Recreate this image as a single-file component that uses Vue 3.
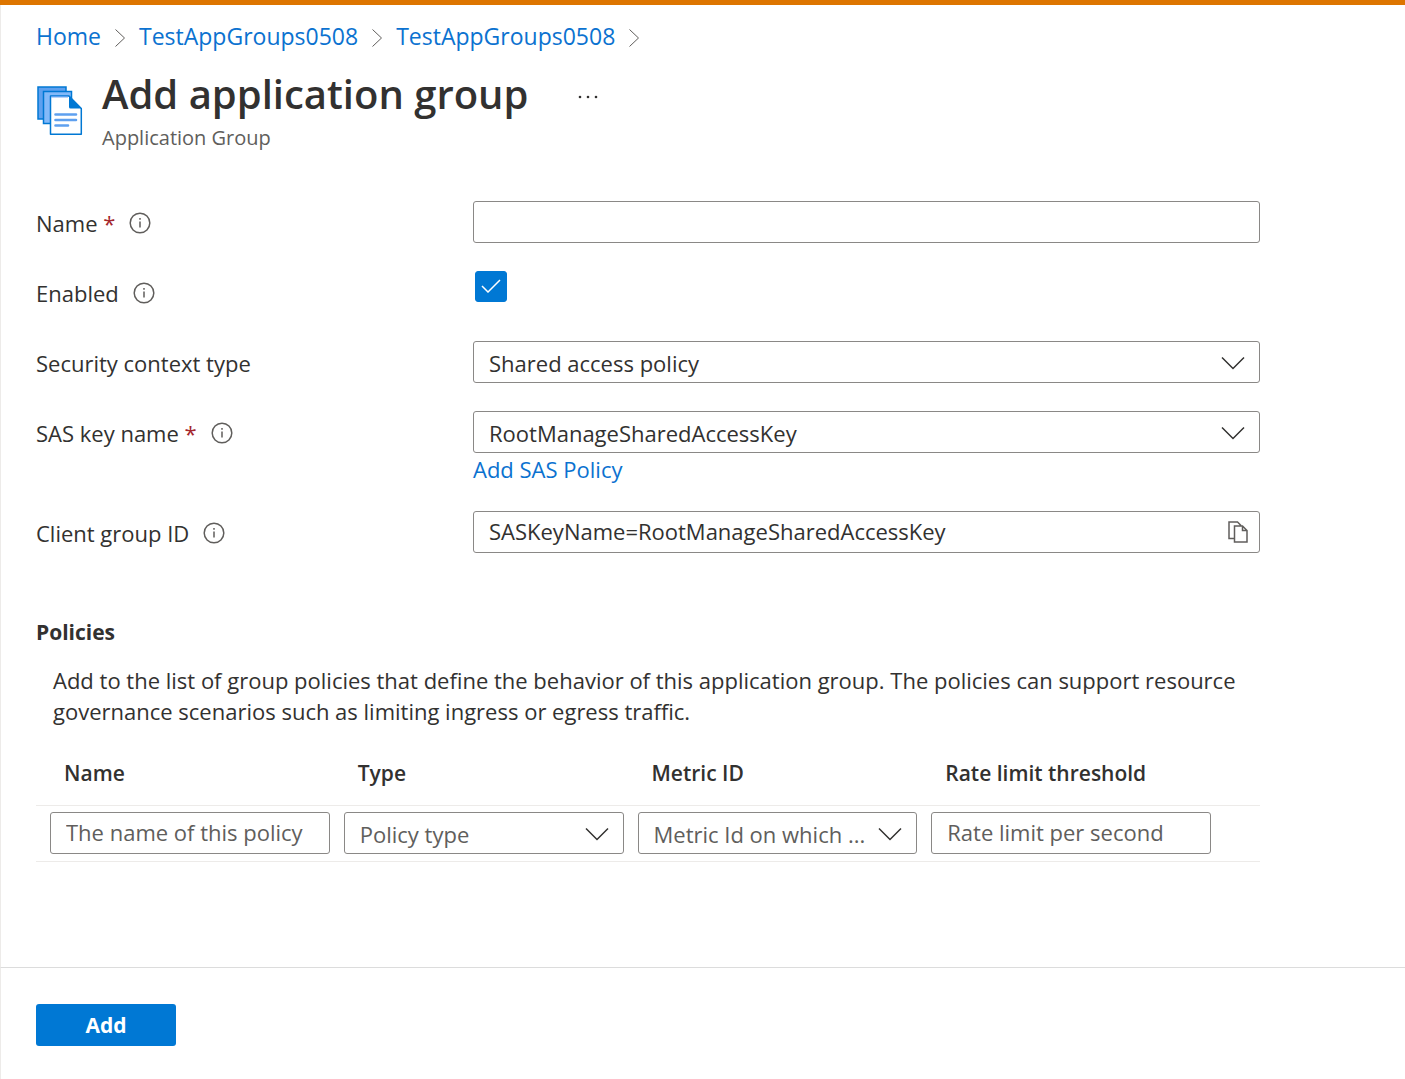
<script setup>
import { ref } from 'vue'

const crumbs = ['Home', 'TestAppGroups0508', 'TestAppGroups0508']
const name = ref('')
const enabled = ref(true)
const contextType = ref('Shared access policy')
const sasKey = ref('RootManageSharedAccessKey')
const clientGroup = ref('SASKeyName=RootManageSharedAccessKey')
const policyName = ref('')
const policyType = ref('Policy type')
const metric = ref('Metric Id on which ...')
const rateLimit = ref('')
</script>

<template>
  <div class="blade">
    <header class="head">
      <nav class="crumbs" aria-label="Breadcrumb">
        <template v-for="(crumb, i) in crumbs" :key="i">
          <a href="#">{{ crumb }}</a>
          <svg class="sep" width="12" height="20" viewBox="0 0 12 20" aria-hidden="true"><path d="M1.500 1.500L10.500 10L1.500 18.500" /></svg>
        </template>
      </nav>
      <div class="title-row">
        <svg class="logo" width="46" height="50" viewBox="0 0 46 50" aria-hidden="true">
          <rect x="1" y="1" width="28" height="32" fill="#5ea0ef" stroke="#0078d4" stroke-width="1.500" />
          <rect x="6.500" y="5.500" width="28" height="32" fill="#83b9f9" stroke="#0078d4" stroke-width="1.500" />
          <path d="M13.500 10H32L44.300 22.500V48.300H13.500Z" fill="#fff" stroke="#0078d4" stroke-width="1.500" stroke-linejoin="round" />
          <path d="M14.200 10.700H31" stroke="#5ea0ef" stroke-width="1.500" />
          <path d="M32 10L44.500 22.500H33.500Q32 22.500 32 21Z" fill="#0078d4" />
          <path d="M18.500 28.500H39M18.500 34H39M18.500 39.500H31" fill="none" stroke="#5ea0ef" stroke-width="2.600" stroke-linecap="round" />
        </svg>
        <div class="titles">
          <h1>Add application group</h1>
          <p>Application Group</p>
        </div>
        <button class="more" type="button" aria-label="More actions">
          <svg width="20" height="4" viewBox="0 0 20 4"><circle cx="2" cy="2" r="1.300" /><circle cx="10" cy="2" r="1.300" /><circle cx="18" cy="2" r="1.300" /></svg>
        </button>
      </div>
    </header>

    <main class="content">
      <form id="group-form" class="form" @submit.prevent>
        <div class="row">
          <div class="label">
            <label for="name">Name <span class="req">*</span></label>
            <svg class="info" viewBox="0 0 22 22"><circle cx="11" cy="11" r="9.800" /><path d="M11 9.500V15.500M11 6V7.700" /></svg>
          </div>
          <input id="name" v-model="name" class="box" type="text" />
        </div>

        <div class="row">
          <div class="label">
            <label for="enabled">Enabled</label>
            <svg class="info" viewBox="0 0 22 22"><circle cx="11" cy="11" r="9.800" /><path d="M11 9.500V15.500M11 6V7.700" /></svg>
          </div>
          <div class="check">
            <input id="enabled" v-model="enabled" type="checkbox" />
            <svg v-if="enabled" width="20" height="14" viewBox="0 0 20 14"><path d="M1 7L7 13L19 1" /></svg>
          </div>
        </div>

        <div class="row">
          <div class="label"><label for="context">Security context type</label></div>
          <div class="picker">
            <select id="context" v-model="contextType" class="box"><option>Shared access policy</option></select>
            <svg class="chevron" viewBox="0 0 24 14"><path d="M1 1.500L12 12.500L23 1.500" /></svg>
          </div>
        </div>

        <div class="row">
          <div class="label">
            <label for="sas">SAS key name <span class="req">*</span></label>
            <svg class="info" viewBox="0 0 22 22"><circle cx="11" cy="11" r="9.800" /><path d="M11 9.500V15.500M11 6V7.700" /></svg>
          </div>
          <div>
            <div class="picker">
              <select id="sas" v-model="sasKey" class="box"><option>RootManageSharedAccessKey</option></select>
              <svg class="chevron" viewBox="0 0 24 14"><path d="M1 1.500L12 12.500L23 1.500" /></svg>
            </div>
            <a class="add-sas" href="#">Add SAS Policy</a>
          </div>
        </div>

        <div class="row">
          <div class="label">
            <label for="client">Client group ID</label>
            <svg class="info" viewBox="0 0 22 22"><circle cx="11" cy="11" r="9.800" /><path d="M11 9.500V15.500M11 6V7.700" /></svg>
          </div>
          <div class="picker">
            <input id="client" v-model="clientGroup" class="box" type="text" readonly />
            <button class="copy" type="button" aria-label="Copy to clipboard">
              <svg width="20" height="22" viewBox="0 0 20 22"><path d="M6 17.500H1V1H9.500L13 4.500M6.500 5H14.500L19 9.500V21H6.500ZM14.500 5V9.500H19" /></svg>
            </button>
          </div>
        </div>
      </form>

      <section class="policies">
        <h2>Policies</h2>
        <p>Add to the list of group policies that define the behavior of this application group. The policies can support resource governance scenarios such as limiting ingress or egress traffic.</p>
        <table>
          <thead>
            <tr>
              <th scope="col">Name</th>
              <th scope="col">Type</th>
              <th scope="col">Metric ID</th>
              <th scope="col" class="last">Rate limit threshold</th>
            </tr>
          </thead>
          <tbody>
            <tr>
              <td><input v-model="policyName" class="box" type="text" aria-label="Name" placeholder="The name of this policy" /></td>
              <td>
                <div class="picker">
                  <select v-model="policyType" class="box muted" aria-label="Type"><option>Policy type</option></select>
                  <svg class="chevron" viewBox="0 0 24 14"><path d="M1 1.500L12 12.500L23 1.500" /></svg>
                </div>
              </td>
              <td>
                <div class="picker">
                  <select v-model="metric" class="box muted" aria-label="Metric ID"><option>Metric Id on which ...</option></select>
                  <svg class="chevron" viewBox="0 0 24 14"><path d="M1 1.500L12 12.500L23 1.500" /></svg>
                </div>
              </td>
              <td class="last"><input v-model="rateLimit" class="box" type="text" aria-label="Rate limit threshold" placeholder="Rate limit per second" /></td>
            </tr>
          </tbody>
        </table>
      </section>
    </main>

    <footer class="foot">
      <button class="primary" type="submit" form="group-form">Add</button>
    </footer>
  </div>
</template>

<style>
body {
  margin: 0;
  background: #fff;
}
</style>

<style scoped>
.blade,
.blade * {
  box-sizing: border-box;
}
.blade {
  display: flex;
  flex-direction: column;
  min-height: 100vh;
  border-top: 5px solid #dd7500;
  font: 22px/30px "Open Sans", "Noto Sans", sans-serif;
  color: #323130;
}
.head,
.content,
.foot {
  border-left: 1px solid #edebe9;
  padding-left: 35px;
}
a {
  color: #0b72d0;
  text-decoration: none;
}
svg {
  display: block;
  flex: none;
}
.crumbs {
  display: flex;
  align-items: center;
  gap: 13px;
  padding-top: 16px;
  font-size: 23px;
}
.sep {
  margin-top: 3px;
  fill: none;
  stroke: #605e5c;
}
.title-row {
  display: flex;
  align-items: flex-start;
  padding-top: 15px;
}
.logo {
  margin: 20px 19px 0 1px;
}
h1 {
  margin: 0;
  font-size: 40px;
  line-height: 56px;
  font-weight: 600;
}
.titles p {
  margin: 0;
  font-size: 20px;
  line-height: 32px;
  color: #605e5c;
}
.more {
  margin: 25px 0 0 46px;
  padding: 4px;
  border: 0;
  background: none;
  fill: #323130;
}
.content {
  flex: 1;
  padding-top: 47px;
}
.form,
.policies {
  max-width: 1224px;
}
.form {
  display: flex;
  flex-direction: column;
  gap: 28px;
}
.row {
  display: grid;
  grid-template-columns: 437px 1fr;
  align-items: start;
}
.label {
  display: flex;
  align-items: center;
  height: 42px;
  padding-top: 2px;
  gap: 14px;
}
.req {
  color: #a4262c;
}
.info {
  width: 22px;
  height: 22px;
  fill: none;
  stroke: #605e5c;
  stroke-width: 1.500;
}
.box {
  display: block;
  width: 100%;
  height: 42px;
  margin: 0;
  padding: 0 15px 2px;
  border: 1px solid #8a8886;
  border-radius: 3px;
  background: #fff;
  color: #323130;
  font: inherit;
  appearance: none;
}
select.box {
  padding: 2px 15px 0;
}
.box::placeholder {
  color: #605e5c;
  opacity: 1;
}
select.muted {
  color: #605e5c;
}
.picker,
.check {
  position: relative;
}
.chevron {
  position: absolute;
  top: 15px;
  right: 15px;
  width: 24px;
  height: 14px;
  fill: none;
  stroke: #323130;
  stroke-width: 1.500;
  pointer-events: none;
}
.check {
  width: 32px;
  height: 31px;
  margin-left: 2px;
}
.check input {
  display: block;
  width: 32px;
  height: 31px;
  margin: 0;
  border: 1px solid #323130;
  border-radius: 3px;
  appearance: none;
}
.check input:checked {
  border-color: #0078d4;
  background: #0078d4;
}
.check svg {
  position: absolute;
  top: 8px;
  left: 6px;
  fill: none;
  stroke: #fff;
  stroke-width: 1.500;
  pointer-events: none;
}
.add-sas {
  display: block;
  width: max-content;
  margin-top: 2px;
  line-height: 28px;
}
.copy {
  position: absolute;
  top: 10px;
  right: 12px;
  padding: 0;
  border: 0;
  background: none;
}
.copy svg {
  fill: none;
  stroke: #605e5c;
  stroke-width: 1.500;
}
h2 {
  margin: 0;
  padding-top: 64px;
  font-size: 21px;
  line-height: 31px;
  font-weight: 700;
}
.policies p {
  margin: 0;
  padding: 17px 0 0 17px;
  line-height: 31px;
}
table {
  width: 100%;
  margin-top: 14px;
  border-collapse: collapse;
  table-layout: fixed;
}
th {
  width: 24%;
  height: 64px;
  padding: 0 0 0 28px;
  border-bottom: 1px solid #edebe9;
  text-align: left;
  font-size: 21px;
  font-weight: 600;
}
th.last {
  width: 28%;
}
td {
  padding: 6px 0 7px 14px;
  border-bottom: 1px solid #edebe9;
}
td.last {
  padding-right: 49px;
}
.foot {
  padding-top: 36px;
  padding-bottom: 33px;
  border-top: 1px solid #dcdcdc;
}
.primary {
  display: block;
  width: 140px;
  height: 42px;
  border: 0;
  border-radius: 3px;
  background: #0078d4;
  color: #fff;
  font: inherit;
  font-size: 21px;
  font-weight: 700;
}
</style>
